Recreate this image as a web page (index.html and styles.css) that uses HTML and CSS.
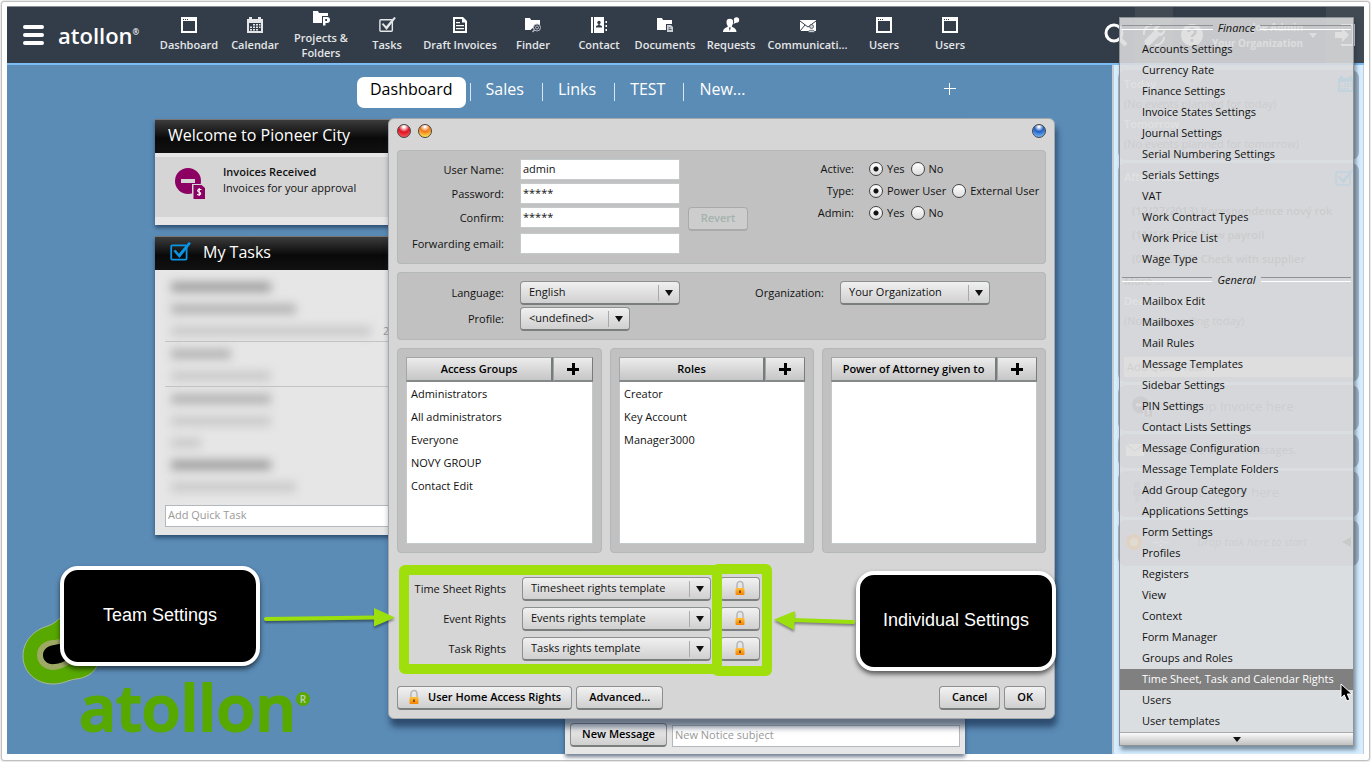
FILE: index.html
```html
<!DOCTYPE html>
<html lang="en">
<head>
<meta charset="utf-8">
<title>atollon</title>
<link rel="stylesheet" href="styles.css">
</head>
<body>
<svg class="defs" aria-hidden="true">
  <defs>
    <linearGradient id="gold" x1="0" y1="0" x2="0" y2="1"><stop offset="0" stop-color="#ffc23c"/><stop offset="1" stop-color="#f58300"/></linearGradient>
    <symbol id="window" viewBox="0 0 16 16"><path fill="#fff" fill-rule="evenodd" d="M0 0h16v16H0zM2 4v10h12V4z"/><path fill="#333d49" d="M2 2h1v1H2zM4 2h1v1H4zM6 2h1v1H6z"/></symbol>
    <symbol id="calendar" viewBox="0 0 16 16"><path fill="currentColor" fill-rule="evenodd" d="M0 2h2V0h3v2h6V0h3v2h2v14H0zM2 6v8h12V6z"/><path fill="currentColor" d="M6 7h2v1.500H6zM9 7h2v1.500H9zM12 7h1.500v1.500H12zM3 9.500h2V11H3zM6 9.500h2V11H6zM9 9.500h2V11H9zM12 9.500h1.500V11H12zM3 12h2v1.500H3zM6 12h2v1.500H6zM9 12h2v1.500H9z"/></symbol>
    <symbol id="check" viewBox="0 0 20 18"><rect x="2" y="3" width="14" height="13" rx="1" fill="none" stroke="currentColor" stroke-width="1.600"/><path fill="currentColor" d="M4 8l2-1 3 3.500L18 0l2 1L9.500 14.500z"/></symbol>
    <symbol id="lock" viewBox="0 0 12 16"><path d="M3 9V5a3 3.500 0 0 1 6 0v4" fill="none" stroke="#b9b9b9" stroke-width="1.600"/><rect x="1.500" y="8" width="9" height="7" rx="1" fill="url(#gold)"/><path fill="#6b3c00" d="M5.200 10.500h1.600v2.500H5.200z"/></symbol>
    <symbol id="invoice" viewBox="0 0 30 31"><circle cx="13" cy="13" r="13" fill="currentColor"/><path fill="#d5d5d5" d="M6 11h14v4H6zM17 16h13v15H17z"/><path fill="currentColor" d="M18.500 17h8l3.500 3v11H18.500z"/><path d="M26.500 21.500c-4-1-5 1.500-2.500 2.500s2.500 3.500-2 2.500M24.200 20v8" fill="none" stroke="#fff" stroke-width="1.100"/></symbol>
  </defs>
</svg>

<div class="app">
  <header class="topbar">
    <button class="burger" aria-label="Menu"><span></span><span></span><span></span></button>
    <div class="brand">atollon<sup>®</sup></div>
    <nav class="mainnav">
      <a href="#"><svg width="16" height="16"><use href="#window"/></svg>Dashboard</a>
      <a href="#"><svg width="16" height="16"><use href="#calendar"/></svg>Calendar</a>
      <a href="#" class="two"><svg width="17" height="16" viewBox="0 0 17 16"><path fill="#fff" d="M0 0h5l1 2h9v10H0z"/><path fill="#333d49" d="M9 5h8v11H9z"/><path fill="#fff" fill-rule="evenodd" d="M10 6h4a2.500 2.500 0 0 1 0 6h-1.500v2.500H10zM12.200 8v2H14V8z"/></svg>Projects &amp;<br>Folders</a>
      <a href="#"><svg width="18" height="16"><use href="#check"/></svg>Tasks</a>
      <a href="#" class="wide"><svg width="14" height="16" viewBox="0 0 14 16"><path fill="#fff" fill-rule="evenodd" d="M0 0h10l4 4v12H0zM2 2v12h10V5.500H9V2z"/><path fill="#fff" d="M3 5h4v1.300H3zM3 8h8v1.300H3zM3 11h8v1.300H3z"/></svg>Draft Invoices</a>
      <a href="#"><svg width="17" height="16" viewBox="0 0 17 16"><path fill="#fff" d="M0 1h5l1 2h9v10H0z"/><path d="M7 14.500l2-2" stroke="#333d49" stroke-width="4"/><circle cx="12" cy="10.500" r="3.500" fill="#333d49" stroke="#b9bfc6"/><circle cx="12" cy="10.500" r="1.500" fill="none" stroke="#b9bfc6"/><path d="M9.500 13L7.500 15" stroke="#b9bfc6" stroke-width="1.500"/></svg>Finder</a>
      <a href="#"><svg width="17" height="16" viewBox="0 0 17 16"><path fill="#fff" d="M0 0h2v16H0zM3 0h10v16H3zM14.500 4H16v2h-1.500zM14.500 8H16v2h-1.500zM14.500 12H16v2h-1.500z"/><circle cx="8" cy="5.500" r="1.700" fill="#333d49"/><path fill="#333d49" d="M7.300 7h1.400v1l2.300 1v1.500H5V9l2.300-1z"/></svg>Contact</a>
      <a href="#"><svg width="17" height="16" viewBox="0 0 17 16"><path fill="#fff" d="M0 1h5l1 2h9v10H0z"/><path fill="#333d49" d="M9 7h8v9H9z"/><path fill="#c9ced3" d="M10 8h4l2 2v5h-6z"/><path fill="#333d49" d="M11.500 10.500h2v.8h-2zM11.500 12.300h3v.8h-3z"/></svg>Documents</a>
      <a href="#"><svg width="17" height="16" viewBox="0 0 17 16"><circle cx="13.500" cy="3" r="2.700" fill="#fff"/><path fill="#fff" d="M11.500 4l-1 3 3-1.500zM3.500 5a3.300 3.300 0 0 1 6.600 0c0 2-.8 3.500-1.400 4.400.6 1 4.800 1.200 4.800 5.600H0c0-4.400 4.300-4.600 4.900-5.600C4.300 8.500 3.500 7 3.500 5z"/><path fill="#333d49" d="M5.800 10.500h2L6.800 14z"/></svg>Requests</a>
      <a href="#" class="wider"><svg width="16" height="13" viewBox="0 0 16 13"><path fill="#fff" d="M0 0h16v11H0z"/><path d="M0 1l8 6 8-6M0 11l5-6" stroke="#333d49" fill="none"/><circle cx="11.500" cy="6.500" r="2" fill="#c9ced3" stroke="#333d49" stroke-width=".7"/><path fill="#c9ced3" stroke="#333d49" stroke-width=".7" d="M8 12.500c0-3 7-3 7 0z"/></svg>Communicati...</a>
      <a href="#"><svg width="16" height="16"><use href="#window"/></svg>Users</a>
      <a href="#"><svg width="16" height="16"><use href="#window"/></svg>Users</a>
    </nav>
    <div class="tools">
      <button class="tool" aria-label="Search"><svg width="24" height="24" viewBox="0 0 24 24"><circle cx="10" cy="10" r="8" fill="none" stroke="#fff" stroke-width="3"/><path d="M16 16l6 6" stroke="#fff" stroke-width="4"/></svg></button>
      <button class="tool lit" aria-label="Settings"><svg width="22" height="22" viewBox="0 0 22 22"><path fill="#fff" d="M2 16L11 7c-1-4 3-7 7-6l-4 4 1 3 3 1 4-4c1 4-2 8-6 7l-9 9c-3 2-7-2-5-5z"/><path d="M1 11C0 6 4 1 9 1M21 13c0 5-5 9-9 8" fill="none" stroke="#fff" stroke-width="2"/></svg></button>
      <button class="tool" aria-label="Help"><svg width="22" height="22" viewBox="0 0 22 22"><circle cx="11" cy="11" r="11" fill="#fff"/><path d="M7.500 8c0-4 7-4 7 0 0 2.500-3.500 2.500-3.500 5M11 15v3" fill="none" stroke="#333d49" stroke-width="2.600"/></svg></button>
      <button class="account"><span>Joe Admin<br>Your Organization</span><i class="caret"></i></button>
      <button class="tool lit" aria-label="Sign out"><svg width="20" height="22" viewBox="0 0 20 22"><path fill="#fff" d="M0 8h7V4l7 7-7 7v-4H0zM6 0h14v22H6v-2h11V2H6z"/></svg></button>
    </div>
  </header>

  <main class="workspace">
    <section class="desk">
      <ul class="tabs">
        <li><a href="#" class="current">Dashboard</a></li>
        <li><a href="#">Sales</a></li>
        <li><a href="#">Links</a></li>
        <li><a href="#">TEST</a></li>
        <li><a href="#">New...</a></li>
        <li class="add"><button aria-label="Add tab"><svg width="12" height="12" viewBox="0 0 12 12"><path fill="#fff" d="M5 0h1v12H5zM0 5h12v1H0z"/></svg></button></li>
      </ul>
      <div class="widgets">
        <div class="column">
          <article class="widget">
            <h2>Welcome to Pioneer City</h2>
            <div class="notice">
              <svg class="magenta" width="30" height="31"><use href="#invoice"/></svg>
              <p><b>Invoices Received</b><br>Invoices for your approval</p>
            </div>
          </article>
          <article class="widget">
            <h2><svg class="azure" width="22" height="20"><use href="#check"/></svg>My Tasks</h2>
            <div class="tasks">
              <div class="blurred">
                <i class="bar strong w-m"></i><i class="bar w-l"></i>
                <div class="dated"><i class="bar faint w-xl"></i><span>2</span></div>
                <hr>
                <i class="bar w-s"></i><i class="bar faint w-m"></i>
                <hr>
                <i class="bar w-m"></i><i class="bar faint w-m"></i><i class="bar faint w-xs"></i><i class="bar strong w-m"></i><i class="bar faint w-l"></i>
              </div>
              <input type="text" class="line" placeholder="Add Quick Task" aria-label="Add Quick Task">
            </div>
          </article>
        </div>
        <div class="column">
          <article class="widget messages">
            <button class="btn">New Message</button>
            <input type="text" class="line" placeholder="New Notice subject" aria-label="New Notice subject">
          </article>
        </div>
      </div>
    </section>

    <aside class="sidebar">
      <section class="card">
        <svg class="corner azure" width="16" height="16"><use href="#calendar"/></svg>
        <h3>Today</h3><p>(No events planned for today)</p>
        <h3>Tomorrow</h3><p>(No events planned for tomorrow)</p>
      </section>
      <section class="card todo">
        <svg class="corner azure" width="20" height="18"><use href="#check"/></svg>
        <h3>After deadline</h3>
        <ul><li>(12/27/2013) Korespondence nový rok</li><li>(11/16/2017) New payroll</li><li>(08/31/2016) Check with supplier</li></ul>
        <p><b>More ...</b></p>
        <h3>Deadline today</h3><p>(No tasks ending today)</p>
        <input type="text" placeholder="Add Quick Task" aria-label="Quick task">
      </section>
      <section class="card drop"><svg width="20" height="21"><use href="#invoice"/></svg>Drop Invoice here</section>
      <section class="card drop mail"><svg width="18" height="12" viewBox="0 0 18 12"><path d="M0 0h18v12H0z" fill="#fff"/><path d="M0 0l9 7 9-7" fill="none" stroke="#888"/></svg>You have 0 new messages.</section>
      <section class="card drop people"><svg width="20" height="20" viewBox="0 0 20 20"><path fill="#8494a3" d="M1 7h8v7H7v6H3v-6H1zM11 7h8v7h-2v6h-4v-6h-2zM2 0h6v6H2zM12 0h6v6h-6z"/></svg>Drop CV here</section>
      <section class="card drop start"><svg width="16" height="16" viewBox="0 0 16 16"><circle cx="8" cy="8" r="8" fill="#ff8a00"/><circle cx="8" cy="8" r="4" fill="#ffd27a"/></svg><b>--:--</b><em>Drop task here to start</em><svg class="back" width="9" height="10" viewBox="0 0 9 10"><path fill="#444" d="M9 0v10L0 5z"/></svg></section>
    </aside>
  </main>

  <div class="logo">
    <svg width="100" height="90" viewBox="0 0 100 90"><path d="M58 0C42 6 38 16 27 20C12 24 2 36 2 50C2 66 15 78 32 78C42 78 47 74 55 73C66 72 74 66 77 58V0z" fill="#57a900" stroke="#a9b89a"/><path d="M58 28C46 32 40 33 34 34C22 34 16 41 16 49C16 58 24 64 33 64C44 63 50 55 60 55z" fill="#9eaa64"/><path d="M58 35C46 35 40 38 33 39C26 40 22 44 22 49C22 55 27 59 34 58C44 57 48 51 60 49z"/></svg>
    <div>atollon<sup>R</sup></div>
  </div>

  <form class="dialog" role="dialog" aria-label="User">
    <div class="chrome"><button type="button" class="orb red" aria-label="Close"></button><button type="button" class="orb amber" aria-label="Minimize"></button><button type="button" class="orb blue" aria-label="Help"></button></div>

    <fieldset class="group identity">
      <div class="fields">
        <label for="user">User Name:</label><input id="user" type="text" value="admin">
        <label for="pass">Password:</label><input id="pass" type="text" value="*****">
        <label for="conf">Confirm:</label><input id="conf" type="text" value="*****">
        <label class="apart" for="fwd">Forwarding email:</label><input class="apart" id="fwd" type="text">
      </div>
      <button type="button" class="btn revert" disabled>Revert</button>
      <div class="flags">
        <span>Active:</span><div><label><input type="radio" name="active" checked>Yes</label><label><input type="radio" name="active">No</label></div>
        <span>Type:</span><div><label><input type="radio" name="type" checked>Power User</label><label><input type="radio" name="type">External User</label></div>
        <span>Admin:</span><div><label><input type="radio" name="adm" checked>Yes</label><label><input type="radio" name="adm">No</label></div>
      </div>
    </fieldset>

    <fieldset class="group locale">
      <label for="lang">Language:</label><div class="pick"><select id="lang"><option>English</option></select></div>
      <label for="org">Organization:</label><div class="pick"><select id="org"><option>Your Organization</option></select></div>
      <label for="prof">Profile:</label><div class="pick short"><select id="prof"><option>&lt;undefined&gt;</option></select></div>
    </fieldset>

    <div class="lists">
      <section class="group list">
        <div class="head"><h4>Access Groups</h4><button type="button" aria-label="Add access group"><svg width="12" height="12" viewBox="0 0 12 12"><path d="M5 0h3v12H5zM0 5h12v3H0z"/></svg></button></div>
        <ul><li>Administrators</li><li>All administrators</li><li>Everyone</li><li>NOVY GROUP</li><li>Contact Edit</li></ul>
      </section>
      <section class="group list">
        <div class="head"><h4>Roles</h4><button type="button" aria-label="Add role"><svg width="12" height="12" viewBox="0 0 12 12"><path d="M5 0h3v12H5zM0 5h12v3H0z"/></svg></button></div>
        <ul><li>Creator</li><li>Key Account</li><li>Manager3000</li></ul>
      </section>
      <section class="group list">
        <div class="head"><h4>Power of Attorney given to</h4><button type="button" aria-label="Add attorney"><svg width="12" height="12" viewBox="0 0 12 12"><path d="M5 0h3v12H5zM0 5h12v3H0z"/></svg></button></div>
        <ul></ul>
      </section>
    </div>

    <div class="rights">
      <label for="ts">Time Sheet Rights</label><div class="pick"><select id="ts"><option>Timesheet rights template</option></select></div><button type="button" class="btn" aria-label="Time sheet rights"><svg width="12" height="16"><use href="#lock"/></svg></button>
      <label for="ev">Event Rights</label><div class="pick"><select id="ev"><option>Events rights template</option></select></div><button type="button" class="btn" aria-label="Event rights"><svg width="12" height="16"><use href="#lock"/></svg></button>
      <label for="tk">Task Rights</label><div class="pick"><select id="tk"><option>Tasks rights template</option></select></div><button type="button" class="btn" aria-label="Task rights"><svg width="12" height="16"><use href="#lock"/></svg></button>
      <div class="mark team"></div>
      <div class="mark single"></div>
    </div>

    <div class="actions">
      <button type="button" class="btn"><svg width="12" height="16"><use href="#lock"/></svg>User Home Access Rights</button>
      <button type="button" class="btn">Advanced...</button>
      <button type="button" class="btn cancel">Cancel</button>
      <button type="button" class="btn">OK</button>
    </div>
  </form>

  <div class="callout left">Team Settings</div>
  <svg class="arrow right-arrow" width="134" height="26" viewBox="0 0 134 26"><path d="M2 13L112 11.500" stroke="#9be00d" stroke-width="4" stroke-linecap="round"/><path d="M110 2l21 9.500-21 9z" fill="#9be00d"/></svg>
  <div class="callout right">Individual Settings</div>
  <svg class="arrow left-arrow" width="84" height="26" viewBox="0 0 84 26"><path d="M80 13L20 11" stroke="#9be00d" stroke-width="4" stroke-linecap="round"/><path d="M22 2L1 10.500 21 21z" fill="#9be00d"/></svg>

  <div class="menu">
    <h5>Finance</h5>
    <ul>
      <li><button>Accounts Settings</button></li><li><button>Currency Rate</button></li><li><button>Finance Settings</button></li><li><button>Invoice States Settings</button></li><li><button>Journal Settings</button></li><li><button>Serial Numbering Settings</button></li><li><button>Serials Settings</button></li><li><button>VAT</button></li><li><button>Work Contract Types</button></li><li><button>Work Price List</button></li><li><button>Wage Type</button></li>
    </ul>
    <h5>General</h5>
    <ul>
      <li><button>Mailbox Edit</button></li><li><button>Mailboxes</button></li><li><button>Mail Rules</button></li><li><button>Message Templates</button></li><li><button>Sidebar Settings</button></li><li><button>PIN Settings</button></li><li><button>Contact Lists Settings</button></li><li><button>Message Configuration</button></li><li><button>Message Template Folders</button></li><li><button>Add Group Category</button></li><li><button>Applications Settings</button></li><li><button>Form Settings</button></li><li><button>Profiles</button></li><li><button>Registers</button></li><li><button>View</button></li><li><button>Context</button></li><li><button>Form Manager</button></li><li><button>Groups and Roles</button></li><li><button class="active">Time Sheet, Task and Calendar Rights</button></li><li><button>Users</button></li><li><button>User templates</button></li>
    </ul>
    <button class="more" aria-label="Scroll down"><i class="caret"></i></button>
    <svg class="cursor" width="14" height="20" viewBox="0 0 14 20"><path d="M1 1v14l3.300-3 2.500 6 3-1.300-2.500-5.700H12z" stroke="#fff"/></svg>
  </div>
</div>
</body>
</html>
```
FILE: styles.css
```css
* { box-sizing: border-box; }
body {
  margin: 0;
  padding: 2px;
  background: #fff;
  font: 11px/16px "Open Sans", "Noto Sans", sans-serif;
  color: #111;
}
h2, h3, h4, h5, p, ul { margin: 0; padding: 0; font-weight: normal; }
b { font-weight: 600; }
ul { list-style: none; }
a { color: inherit; text-decoration: none; }
button { margin: 0; padding: 0; border: 0; background: none; font: inherit; color: inherit; }
input, select { margin: 0; font: inherit; color: inherit; }
.defs { position: absolute; width: 0; height: 0; }

.app {
  position: relative;
  display: flex;
  flex-direction: column;
  min-height: calc(100vh - 4px);
  padding: 4px 5px 6px;
  border-radius: 2px;
  box-shadow: 0 0 2px 1px #aaa;
}

/* Top bar */
.topbar {
  display: flex;
  align-items: stretch;
  height: 59px;
  background: #333d49;
  border-top: 1px solid #8c9097;
  border-bottom: 2px solid #7dbcf5;
  color: #e4e6e8;
}
.burger { display: flex; flex-direction: column; justify-content: center; gap: 4px; margin: 0 14px 0 16px; }
.burger span { width: 21px; height: 4px; border-radius: 2px; background: #fff; }
.brand { align-self: center; width: 98px; font-size: 22px; font-weight: 600; line-height: 30px; color: #fff; }
.brand sup { font-size: 8px; vertical-align: 9px; line-height: 8px; }
.mainnav { display: flex; font-weight: 600; line-height: 15px; text-align: center; }
.mainnav a { display: flex; flex-direction: column; align-items: center; justify-content: flex-end; gap: 4px; width: 66px; padding-bottom: 11px; white-space: nowrap; }
.mainnav a.two { padding-bottom: 3px; gap: 3px; }
.mainnav a.wide { width: 80px; }
.mainnav a.wider { width: 87px; }
.tools { display: flex; margin-left: auto; }
.tool { width: 38px; display: flex; align-items: center; justify-content: center; }
.tool.lit { background: #414952; }
.account { display: flex; align-items: center; gap: 6px; width: 115px; justify-content: flex-end; padding-right: 9px; white-space: nowrap; font-size: 10px; font-weight: 700; text-align: right; }
.caret { display: inline-block; border: 4px solid transparent; border-top: 5px solid currentColor; border-bottom: 0; }

/* Desktop */
.workspace { flex: 1; display: grid; grid-template-columns: 1fr 252px; min-height: 0; }
.desk { display: flex; flex-direction: column; padding: 12px 0 0 148px; background: #5b8cb6; }
.tabs { display: flex; align-items: flex-start; width: 810px; height: 31px; margin-bottom: 11px; padding-left: 202px; color: #fff; font-size: 16px; line-height: 24px; }
.tabs a { display: block; }
.tabs li + li { height: 18px; margin: 6px 0 0 4px; padding: 0 14px 0 15px; border-left: 1px solid #d8e6f2; }
.tabs li + li a { margin-top: -6px; }
.tabs li a.current { padding: 0 13px 7px; border-radius: 7px; background: #fff; color: #000; }
.tabs li.add { margin-left: auto; padding: 0 9px; border: 0; line-height: 12px; }
.widgets { flex: 1; display: grid; grid-template-columns: 400px 400px; gap: 10px; }
.column { display: flex; flex-direction: column; gap: 11px; }
.widget { background: #e6e6e6; box-shadow: 0 3px 4px rgba(20, 40, 70, .6); }
.widget h2 { display: flex; align-items: center; gap: 12px; height: 34px; padding: 0 13px 3px; border-top: 1px solid #777; background: linear-gradient(#3c3c3c, #090909 55%, #111); color: #fff; font-size: 16px; line-height: 22px; }
.notice { display: flex; gap: 18px; height: 60px; margin: 4px 0 8px; padding: 7px 20px; background: #d5d5d5; }
.notice svg { margin-top: 4px; }
.magenta { color: #8b0062; }
.azure { color: #0a95e6; }
.widget h2 svg { margin-left: 1px; }
.tasks { padding: 12px 10px 8px; }
.blurred { height: 223px; padding: 0 6px; }
.bar { display: block; height: 10px; margin-bottom: 12px; background: #b4b4b4; filter: blur(5px); }
.bar.strong { background: #a0a0a0; }
.bar.faint { background: #cacaca; }
.bar.w-xs { width: 30px; } .bar.w-s { width: 60px; } .bar.w-m { width: 100px; } .bar.w-l { width: 125px; } .bar.w-xl { width: 200px; }
.dated { display: flex; gap: 12px; height: 22px; color: #999; }
.dated span { line-height: 10px; }
.blurred hr { height: 1px; margin: -7px -6px 7px; border: 0; background: #c4c4c4; }
.line { display: block; width: 100%; height: 22px; padding: 0 2px 3px; border: 1px solid #b2b8bb; background: #fff; }
.line::placeholder { color: #999; opacity: 1; }
.messages { flex: 1; display: flex; align-items: flex-end; gap: 5px; padding: 0 5px 7px; }

/* Buttons and pickers */
.btn {
  display: flex;
  align-items: center;
  justify-content: center;
  gap: 8px;
  height: 24px;
  padding: 0 12px 1px;
  border: 1px solid #8d9090;
  border-bottom: 2px solid #7b7e7e;
  border-radius: 4px;
  background: linear-gradient(#f2f2f2, #cfcfcf);
  font-weight: 600;
  color: #000;
  white-space: nowrap;
}
.messages .btn { flex: 0 0 97px; padding: 0 0 1px; }
.btn:disabled { border-color: #aaa; background: #cdcdcd; color: #a3b3ae; }
.pick { position: relative; }
.pick select {
  appearance: none;
  display: block;
  width: 100%;
  height: 24px;
  padding: 0 24px 1px 8px;
  border: 1px solid #8d9090;
  border-bottom: 2px solid #7b7e7e;
  border-radius: 4px;
  background: linear-gradient(#aaa, #aaa) right 20px center / 1px 16px no-repeat, linear-gradient(#f0f0f0, #d0d0d0);
}
.pick::after { content: ""; position: absolute; right: 7px; top: 9px; border: 4px solid transparent; border-top: 6px solid #111; border-bottom: 0; pointer-events: none; }

/* Dialog */
.dialog {
  position: absolute;
  left: 386px;
  top: 116px;
  width: 667px;
  padding: 0 8px 8px;
  border: 1px solid #a5a9ac;
  border-radius: 6px;
  background: #d6d6d6;
  box-shadow: 2px 8px 6px rgba(15, 35, 65, .6);
}
.chrome { display: flex; gap: 7px; padding: 5px 0 0; height: 31px; }
.orb { width: 14px; height: 14px; border: 1px solid #444; border-radius: 50%; }
.orb.red { background: radial-gradient(circle at 50% 15%, #fff 8%, #e0121f 45%, #ff6b75); }
.orb.amber { background: radial-gradient(circle at 50% 15%, #fff 5%, #f0781a 40%, #ffee55 90%); }
.orb.blue { margin-left: auto; background: radial-gradient(circle at 50% 15%, #fff 5%, #1f5fc4 40%, #8cc6ff 95%); }
.group { margin: 0; border: 1px solid #b4b8b8; border-radius: 4px; background: #c1c1c1; }
.identity { display: flex; align-items: flex-start; height: 114px; padding: 8px 0; margin-bottom: 8px; }
.fields { display: grid; grid-template-columns: 106px 160px; gap: 3px 16px; align-items: center; text-align: right; }
.fields input { height: 21px; padding: 0 2px 3px; border: 1px solid #c4cacb; background: #fff; }
.fields .apart { margin-top: 2px; }
.btn.revert { width: 60px; margin: 48px 46px 0 8px; }
.flags { display: grid; grid-template-columns: 60px auto; gap: 6px 15px; text-align: right; white-space: nowrap; padding-top: 2px; }
.flags div { display: flex; gap: 6px; }
.flags label { display: flex; align-items: center; gap: 4px; }
.flags input { appearance: none; width: 14px; height: 14px; border: 1px solid #444; border-radius: 50%; background: linear-gradient(#fff, #ddd); }
.flags input:checked { background: radial-gradient(circle, #111 2px, #fff0 3px), linear-gradient(#fff, #ddd); }
.locale { display: grid; grid-template-columns: 106px 160px 128px 150px; gap: 2px 16px; align-items: center; align-content: start; height: 68px; padding: 8px 0; margin-bottom: 8px; text-align: right; }
.pick.short { width: 110px; }
.lists { display: grid; grid-template-columns: 205fr 204fr 224fr; gap: 8px; }
.list { padding: 8px; height: 205px; display: flex; flex-direction: column; }
.head { display: flex; height: 25px; }
.head h4, .head button { display: flex; align-items: center; justify-content: center; border: 1px solid #a2a6a6; border-right: 2px solid #777b7b; border-bottom: 2px solid #858989; background: linear-gradient(#ececec, #c6c6c6); }
.head h4 { flex: 1; font-weight: 600; color: #000; }
.head button { width: 40px; border-right-width: 1px; }
.list ul { flex: 1; padding: 0 4px; background: #fff; border: 1px solid #c4cacb; border-top: 0; }
.list li { line-height: 23px; }
.rights { position: relative; display: grid; grid-template-columns: 109px 189px 40px; gap: 6px 0; align-items: center; margin: 24px 0 25px; text-align: right; }
.rights .pick { margin: 0 0 0 16px; width: 189px; }
.rights .btn { margin-left: 25px; width: 40px; }
.mark { position: absolute; border: 10px solid #9fe00c; border-radius: 6px; pointer-events: none; }
.mark.team { left: 2px; top: -12px; width: 323px; height: 109px; }
.mark.single { left: 315px; top: -13px; width: 60px; height: 112px; }
.actions { display: flex; gap: 4px; }
.actions .btn:first-child { padding-right: 10px; padding-left: 10px; }
.actions .cancel { margin-left: auto; }

/* Annotations */
.callout {
  position: absolute;
  display: flex;
  align-items: center;
  justify-content: center;
  width: 200px;
  height: 100px;
  padding-bottom: 2px;
  border: 4px solid #fff;
  border-radius: 18px;
  background: #000;
  box-shadow: 0 3px 5px rgba(0, 0, 0, .6);
  color: #fff;
  font: 18px/24px "Liberation Sans", Arial, sans-serif;
}
.callout.left { left: 58px; top: 564px; }
.callout.right { left: 854px; top: 569px; }
.arrow { position: absolute; fill: none; filter: drop-shadow(0 2px 1px rgba(0, 0, 0, .4)); }
.right-arrow { left: 262px; top: 604px; }
.left-arrow { left: 771px; top: 607px; }
.logo { position: absolute; left: 19px; top: 604px; color: #57a900; }
.logo svg { display: block; }
.logo div { margin: -29px 0 0 58px; font-size: 64px; font-weight: 600; line-height: 80px; -webkit-text-stroke: 2px #57a900; }
.logo sup { display: inline-block; width: 14px; height: 14px; border-radius: 50%; background: #57a900; color: #c3cbb8; font-size: 10px; line-height: 14px; text-align: center; vertical-align: 28px; -webkit-text-stroke: 0; }

/* Sidebar */
.sidebar { display: flex; flex-direction: column; gap: 3px; padding: 5px 4px 0; border-left: 2px solid #c5ccd2; border-right: 1px solid #c5ccd2; background: #d6eeff; color: #555; }
.card { position: relative; padding: 4px 6px; border-radius: 8px; background: #a3b5c5; line-height: 20px; }
.card h3 { color: #fff; font-size: 11px; font-weight: 600; }
.card ul { margin: 12px 0 0 8px; font-weight: 600; line-height: 24px; }
.card:first-child { height: 90px; }
.todo { height: 219px; }
.todo input { width: 100%; height: 20px; margin-top: 26px; padding: 0 3px; border: 0; background: #eee; }
.corner { position: absolute; right: 5px; top: 6px; }
.drop { display: flex; align-items: center; gap: 34px; height: 46px; padding: 0 14px 4px; font-size: 13px; color: #667; }
.drop.mail { height: 34px; gap: 12px; padding: 0 8px 2px; font-size: 11px; font-weight: 600; }
.drop.people { gap: 46px; }
.drop.start { gap: 10px; padding: 0 8px 2px; font-size: 11px; }
.start b { color: #fff; }
.start em { margin-left: 18px; }
.start .back { margin-left: auto; }

/* Settings menu */
.menu { position: absolute; right: 15px; top: 15px; width: 235px; border: 1px solid #8f9396; background: rgba(220, 220, 221, .88); box-shadow: 2px 4px 4px rgba(30, 50, 70, .5); line-height: 19px; }
.menu h5 { display: flex; align-items: center; gap: 5px; padding: 0 2px 3px; height: 21px; font-size: 11px; font-style: italic; }
.menu h5::before, .menu h5::after { content: ""; flex: 1; height: 3px; border-top: 1px solid #8f9396; border-bottom: 1px solid #fff; }
.menu li button { display: block; width: 100%; height: 21px; padding: 0 22px 2px; text-align: left; white-space: nowrap; }
.menu li button.active { background: #808080; color: #fff; }
.menu .more { display: flex; align-items: center; justify-content: center; width: 100%; height: 13px; border-top: 1px solid #aaa; background: linear-gradient(#fafafa, #c0c0c0); }
.cursor { position: absolute; right: -1px; top: 665px; }
```
